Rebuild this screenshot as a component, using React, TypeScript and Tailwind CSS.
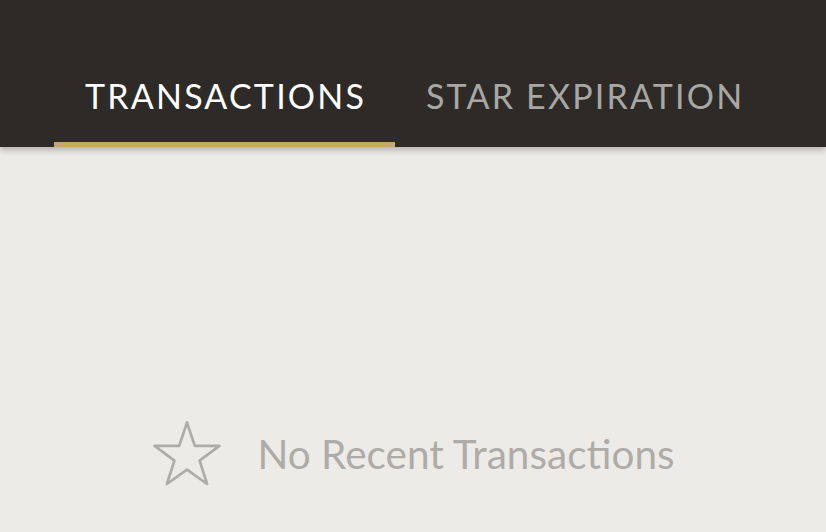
import { useState } from 'react'

const tabs = ['Transactions', 'Star Expiration']

export default function App() {
  const [active, setActive] = useState(0)

  return (
    <div className="w-[826px] h-[532px] overflow-hidden bg-[#edebe7] flex flex-col" style={{ fontFamily: 'Lato, "Open Sans", sans-serif' }}>
      <div className="relative z-10 h-[147px] shrink-0 bg-[#2d2a27] flex items-end pl-[54px] shadow-[0_3px_6px_rgba(0,0,0,0.25)]">
        {tabs.map((t, i) => (
          <button
            key={t}
            onClick={() => setActive(i)}
            className={
              'relative h-full px-[31px] pt-[48px] pb-[5px] flex items-center whitespace-nowrap uppercase text-[34px] tracking-[2.2px] ' +
              (i === active ? 'text-white' : 'text-[#a9a7a4]')
            }
          >
            <span className="-mr-[2.2px]">{t}</span>
            {i === active && <span className="absolute left-0 right-0 bottom-0 h-[5px] bg-[#c9a865]" />}
          </button>
        ))}
      </div>
      <div className="flex-1 flex items-end justify-center pb-[42px]">
        <div className="flex items-center gap-[34px] text-[#aeaca8]">
          <svg width="72" height="72" viewBox="0 0 24 24" fill="none" stroke="currentColor" strokeWidth="0.9" strokeLinejoin="round">
            <polygon points="12,1.5 14.6,9.3 22.8,9.3 16.2,14.2 18.7,22 12,17.2 5.3,22 7.8,14.2 1.2,9.3 9.4,9.3" />
          </svg>
          <span className="text-[40.5px] leading-none">No Recent Transactions</span>
        </div>
      </div>
    </div>
  )
}
